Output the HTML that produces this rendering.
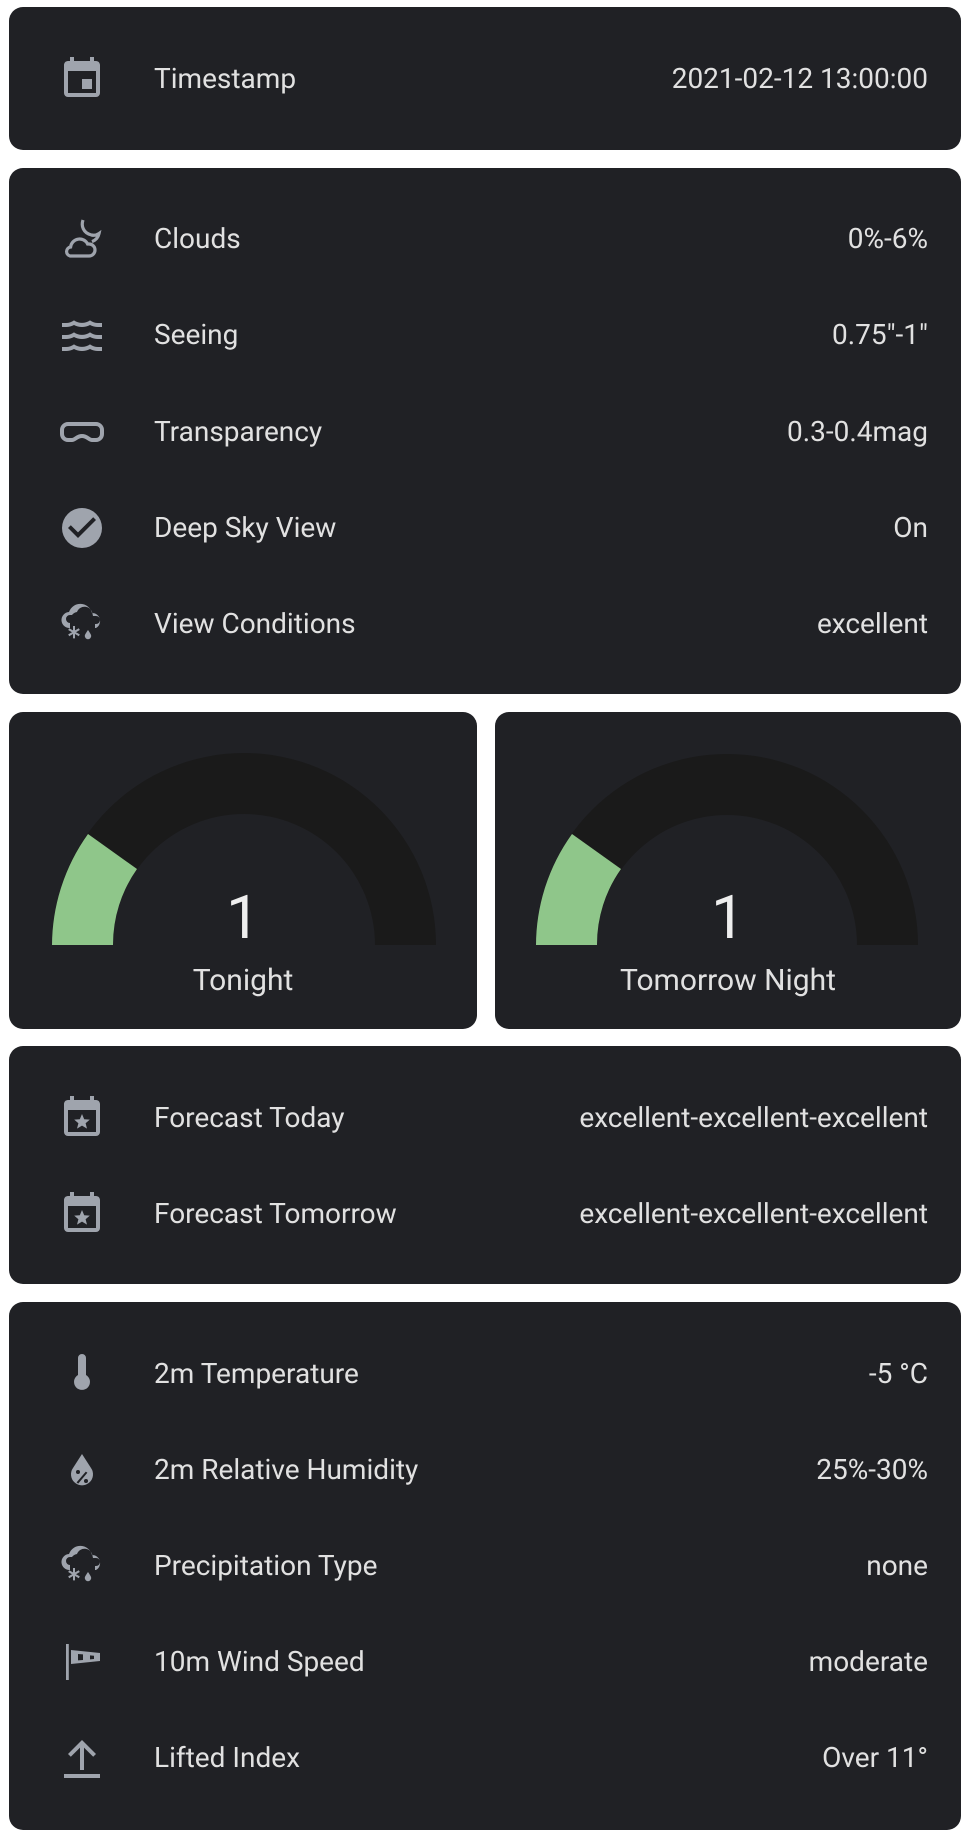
<!DOCTYPE html>
<html><head><meta charset="utf-8"><style>
html,body{margin:0;padding:0;background:#fff;width:969px;height:1838px;overflow:hidden}
body{font-family:"Roboto","Liberation Sans",sans-serif;color:#e1e1e1;position:relative}
.card{position:absolute;background:#202125;border-radius:14px}
.row{position:absolute;left:0;right:0;height:48px}
.row svg{position:absolute;left:49px;top:0;width:48px;height:48px;fill:#9fa4ad}
.row .l{position:absolute;left:145px;top:0;line-height:48px;font-size:28px}
.row .v{position:absolute;right:33px;top:0;line-height:48px;font-size:28px}
.g{position:absolute;top:0}
.num{position:absolute;width:100%;text-align:center;font-size:60px;color:#eee;top:176px;line-height:60px}
.lab{position:absolute;width:100%;text-align:center;font-size:30px;top:252px;line-height:34px}
</style></head><body>

<div class="card" style="left:9px;top:7px;width:952px;height:143px">
 <div class="row" style="top:48px"><svg viewBox="0 0 24 24"><path d="M19,19H5V8H19M16,1V3H8V1H6V3H5C3.89,3 3,3.89 3,5V19A2,2 0 0,0 5,21H19A2,2 0 0,0 21,19V5C21,3.89 20.1,3 19,3H18V1M17,12H12V17H17V12Z"/></svg><span class="l">Timestamp</span><span class="v">2021-02-12 13:00:00</span></div>
</div>

<div class="card" style="left:9px;top:168px;width:952px;height:526px">
 <div class="row" style="top:47px"><svg viewBox="0 0 24 24" style="fill:none;stroke:#9fa4ad;stroke-width:1.6"><path d="M12.5 2.5c-1 2.8 0 6.5 4.2 7.5 1.5.3 2.8 0 3.8-.7-.4 1.8-1.7 3.3-3.5 4"/><path d="M6 20.5h9.5a3 3 0 0 0 0-6h-.7a4.5 4.5 0 0 0-8.5 1.5A2.3 2.3 0 0 0 6 20.5z"/></svg><span class="l">Clouds</span><span class="v">0%-6%</span></div>
 <div class="row" style="top:143px"><svg viewBox="0 0 24 24"><path d="M20,12H22V14H20C18.62,14 17.26,13.65 16,13C13.5,14.3 10.5,14.3 8,13C6.74,13.65 5.37,14 4,14H2V12H4C5.39,12 6.78,11.53 8,10.67C10.44,12.38 13.560,12.38 16,10.67C17.22,11.53 18.61,12 20,12M20,6H22V8H20C18.62,8 17.26,7.65 16,7C13.5,8.3 10.5,8.3 8,7C6.74,7.65 5.37,8 4,8H2V6H4C5.39,6 6.78,5.53 8,4.67C10.44,6.38 13.56,6.38 16,4.67C17.22,5.53 18.61,6 20,6M20,18H22V20H20C18.62,20 17.26,19.65 16,19C13.5,20.3 10.5,20.3 8,19C6.74,19.65 5.37,20 4,20H2V18H4C5.39,18 6.78,17.53 8,16.67C10.44,18.38 13.56,18.38 16,16.67C17.22,17.530 18.61,18 20,18Z"/></svg><span class="l">Seeing</span><span class="v">0.75"-1"</span></div>
 <div class="row" style="top:240px"><svg viewBox="0 0 24 24" style="fill:none;stroke:#9fa4ad;stroke-width:2"><path d="M5 8h14a3 3 0 0 1 3 3v2a3 3 0 0 1-3 3h-2c-1.5 0-2.5-2-5-2s-3.5 2-5 2H5a3 3 0 0 1-3-3v-2a3 3 0 0 1 3-3z"/></svg><span class="l">Transparency</span><span class="v">0.3-0.4mag</span></div>
 <div class="row" style="top:336px"><svg viewBox="0 0 24 24"><path d="M12 2a10 10 0 1 0 0 20 10 10 0 0 0 0-20zm-2 15l-5-5 1.4-1.4 3.6 3.6 7.6-7.6L19 8l-9 9z"/></svg><span class="l">Deep Sky View</span><span class="v">On</span></div>
 <div class="row" style="top:432px"><svg viewBox="0 0 24 24"><path d="M6 14a4 4 0 0 1-.5-8A6 6 0 0 1 17 6.5 4 4 0 0 1 19 14h-.5v-2H19a2 2 0 0 0 0-4h-1.5l-.3-1.3A4 4 0 0 0 9.5 6 4 4 0 0 0 7 7.5H6a2 2 0 0 0 0 4v2.5z"/><path d="M7.5 13h1v2.2l1.9-1.1.5.9-1.9 1.1 1.9 1.1-.5.9-1.9-1.1V19.2h-1V17l-1.9 1.1-.5-.9 1.9-1.1-1.9-1.1.5-.9 1.9 1.1z"/><path d="M15 15c1 1.5 1.6 2.3 1.6 3a1.6 1.6 0 0 1-3.2 0c0-.7.6-1.5 1.6-3z"/></svg><span class="l">View Conditions</span><span class="v">excellent</span></div>
</div>

<div class="card" style="left:9px;top:712px;width:468px;height:317px">
 <svg class="g" width="468" height="317" viewBox="0 0 468 317"><path d="M43 233A192 192 0 0 1 427 233H366A131 131 0 0 0 104 233Z" fill="#1a1a1a"/><path d="M43 233A192 192 0 0 1 79 122L128 157A131 131 0 0 0 104 233Z" fill="#8fc68a"/></svg>
 <div class="num">1</div><div class="lab">Tonight</div>
</div>
<div class="card" style="left:495px;top:712px;width:466px;height:317px">
 <svg class="g" width="466" height="317" viewBox="0 0 466 317"><path d="M41 233A191 191 0 0 1 423 233H362A130 130 0 0 0 102 233Z" fill="#1a1a1a"/><path d="M41 233A191 191 0 0 1 77 122L126 157A130 130 0 0 0 102 233Z" fill="#8fc68a"/></svg>
 <div class="num">1</div><div class="lab">Tomorrow Night</div>
</div>

<div class="card" style="left:9px;top:1046px;width:952px;height:238px">
 <div class="row" style="top:48px"><svg viewBox="0 0 24 24"><path d="M19,19H5V8H19M16,1V3H8V1H6V3H5C3.89,3 3,3.89 3,5V19A2,2 0 0,0 5,21H19A2,2 0 0,0 21,19V5C21,3.89 20.1,3 19,3H18V1Z"/><path d="M12 10l1.1 2.6 2.8.2-2.1 1.8.7 2.7L12 15.8l-2.5 1.5.7-2.7-2.1-1.8 2.8-.2z"/></svg><span class="l">Forecast Today</span><span class="v">excellent-excellent-excellent</span></div>
 <div class="row" style="top:144px"><svg viewBox="0 0 24 24"><path d="M19,19H5V8H19M16,1V3H8V1H6V3H5C3.89,3 3,3.89 3,5V19A2,2 0 0,0 5,21H19A2,2 0 0,0 21,19V5C21,3.89 20.1,3 19,3H18V1Z"/><path d="M12 10l1.1 2.6 2.8.2-2.1 1.8.7 2.7L12 15.8l-2.5 1.5.7-2.7-2.1-1.8 2.8-.2z"/></svg><span class="l">Forecast Tomorrow</span><span class="v">excellent-excellent-excellent</span></div>
</div>

<div class="card" style="left:9px;top:1302px;width:952px;height:528px">
 <div class="row" style="top:48px"><svg viewBox="0 0 24 24"><path d="M12 2a2 2 0 0 1 2 2v8.5a4 4 0 1 1-4 0V4a2 2 0 0 1 2-2z"/></svg><span class="l">2m Temperature</span><span class="v">-5 °C</span></div>
 <div class="row" style="top:144px"><svg viewBox="0 0 24 24"><path d="M12 4l4.5 7a5.5 5.5 0 1 1-9 0z"/><g fill="#202125"><circle cx="10" cy="13" r="1"/><circle cx="14" cy="17.5" r="1"/><path d="M9.3 18.2l4.6-5.4.8.6-4.6 5.4z"/></g></svg><span class="l">2m Relative Humidity</span><span class="v">25%-30%</span></div>
 <div class="row" style="top:240px"><svg viewBox="0 0 24 24"><path d="M6 14a4 4 0 0 1-.5-8A6 6 0 0 1 17 6.5 4 4 0 0 1 19 14h-.5v-2H19a2 2 0 0 0 0-4h-1.5l-.3-1.3A4 4 0 0 0 9.5 6 4 4 0 0 0 7 7.5H6a2 2 0 0 0 0 4v2.5z"/><path d="M7.5 13h1v2.2l1.9-1.1.5.9-1.9 1.1 1.9 1.1-.5.9-1.900-1.1V19.2h-1V17l-1.9 1.1-.5-.9 1.9-1.1-1.9-1.1.5-.9 1.9 1.1z"/><path d="M15 15c1 1.5 1.6 2.3 1.6 3a1.6 1.6 0 0 1-3.2 0c0-.7.6-1.5 1.6-3z"/></svg><span class="l">Precipitation Type</span><span class="v">none</span></div>
 <div class="row" style="top:336px"><svg viewBox="0 0 24 24"><path d="M4 3h1.4v18H4z"/><path d="M6.5 6l14.5 1.5v4L6.5 13zM10 8v3.2l2.5-.2V8.2zM16 8.7v2l2-.2V8.9z" fill-rule="evenodd"/></svg><span class="l">10m Wind Speed</span><span class="v">moderate</span></div>
 <div class="row" style="top:432px"><svg viewBox="0 0 24 24"><path d="M3 20h18v2H3zM11 18V6.8L6.4 11.4 5 10l7-7 7 7-1.4 1.4L13 6.8V18z"/></svg><span class="l">Lifted Index</span><span class="v">Over 11°</span></div>
</div>
</body></html>
